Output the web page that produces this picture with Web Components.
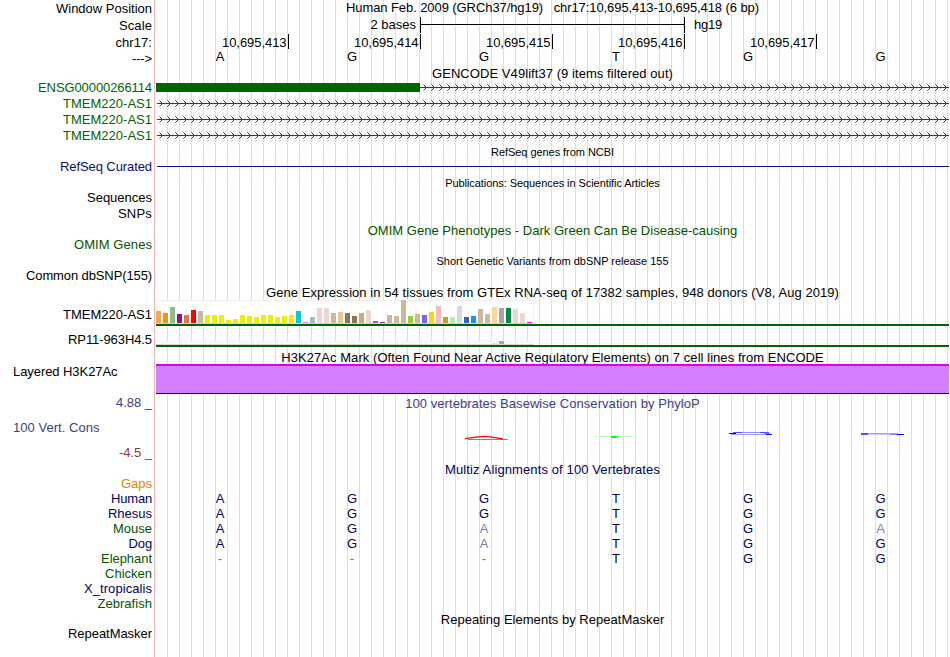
<!DOCTYPE html>
<html lang="en">
<head>
<meta charset="utf-8">
<title>Genome tracks</title>
<style>
html,body{margin:0;background:#fff}
body{width:950px;height:657px;overflow:hidden}
</style>
</head>
<body>
<genome-browser></genome-browser>
<script>
const define = (name, cls) => customElements.define(name, cls);
const BASE_FONT = "13px 'Liberation Sans',Arial,sans-serif";

// A single line of text whose tracking is spread so that it fills the `fit` width.
define('fit-text', class extends HTMLElement {
  connectedCallback() {
    const root = this.attachShadow({mode: 'open'});
    root.innerHTML = `<style>
      :host{display:block;white-space:pre;font:${BASE_FONT};line-height:15px;color:${this.getAttribute('color') || '#000'};
        margin-top:${this.getAttribute('top') || 0}px}
      :host([small]){font-size:11px;line-height:12px}
      span{display:inline-block}
    </style><span></span>`;
    const span = root.querySelector('span');
    span.textContent = this.getAttribute('text');
    const fit = parseFloat(this.getAttribute('fit'));
    if (fit) {
      const n = span.textContent.length;
      const ls = (fit - span.getBoundingClientRect().width) / n;
      span.style.letterSpacing = ls.toFixed(3) + 'px';
    }
  }
});

// One horizontal band: a label column and a drawing area.
define('track-row', class extends HTMLElement {
  connectedCallback() {
    this.attachShadow({mode: 'open'}).innerHTML = `<style>
      :host{display:grid;grid-template-columns:152px 793px;column-gap:4px;height:${this.getAttribute('h')}px}
      .label{display:flex;flex-direction:column;align-items:flex-end;min-width:0}
      :host([left]) .label{align-items:flex-start;padding-left:13px}
      .area{display:flex;flex-direction:column;align-items:center;min-width:0}
    </style><div class="label"><slot name="label"></slot></div><div class="area"><slot></slot></div>`;
  }
});

define('scale-bar', class extends HTMLElement {
  connectedCallback() {
    this.attachShadow({mode: 'open'}).innerHTML = `<style>
      :host{display:grid;grid-template-columns:260px 265px 1fr;column-gap:0;width:793px;height:16px}
      .l{display:flex;justify-content:flex-end}
      .bar{margin-left:4px;width:263px;border:solid #000;border-width:0 1px;height:16px;
        background:linear-gradient(#000,#000) 0 7px/100% 1px no-repeat}
      .r{padding-left:13px}
    </style><div class="l"><fit-text text="2 bases" fit="45.5"></fit-text></div><div class="bar"></div>
    <div class="r"><fit-text text="hg19" fit="28"></fit-text></div>`;
  }
});

define('coord-ruler', class extends HTMLElement {
  connectedCallback() {
    this.attachShadow({mode: 'open'}).innerHTML = `<style>
      :host{display:flex;width:792px;padding-left:1px;box-sizing:border-box}
      div{box-sizing:border-box;width:132px;height:15px;border-right:1px solid #000;padding-right:1.5px;display:flex;justify-content:flex-end}
    </style>` + [413,414,415,416,417].map(n => `<div><fit-text top="1" text="10,695,${n}" fit="64.5"></fit-text></div>`).join('');
  }
});

define('base-row', class extends HTMLElement {
  connectedCallback() {
    const bases = this.getAttribute('bases'), dim = this.getAttribute('dim') || '', color = this.getAttribute('color') || '#000';
    this.attachShadow({mode: 'open'}).innerHTML = `<style>
      :host{display:flex;width:793px;align-self:flex-start;margin-left:-2px}
      div{width:132px;display:flex;justify-content:center}
      div:last-child{width:133px}
    </style>` + [...bases].map((b, i) =>
      `<div><fit-text text="${b}" color="${dim.includes(i) ? '#7f7fb0' : b === '-' ? '#707090' : color}"></fit-text></div>`).join('');
  }
});

// Intron line with strand chevrons, optionally preceded by an exon block.
define('gene-model', class extends HTMLElement {
  connectedCallback() {
    const exon = +this.getAttribute('exon') || 0, start = exon || 1;
    let d = '', tips = '';
    for (let x = 3; x < 793; x += 8) {
      if (x < exon) continue;
      d += `M${x+1} 5h1v1h-1zM${x+2} 6h1v1h-1zM${x+2} 8h1v1h-1zM${x+1} 9h1v1h-1z`;
      tips += `M${x} 4h1v1h-1zM${x} 10h1v1h-1z`;
    }
    this.attachShadow({mode: 'open'}).innerHTML = `<style>:host{display:block}svg{display:block}</style>
      <svg width="793" height="16" shape-rendering="crispEdges" fill="#006400">
      ${exon ? `<rect y="3" width="${exon}" height="9"/>` : ''}<rect x="${start}" y="7" width="${793-start}" height="1"/>
      <path d="${d}"/><path d="${tips}" fill-opacity=".5"/></svg>`;
  }
});

define('plain-line', class extends HTMLElement {
  connectedCallback() {
    this.attachShadow({mode: 'open'}).innerHTML = `<style>:host{display:block;width:792px;height:1px;margin:7px 0 0 1px;background:#0c0c78}</style>`;
  }
});

const TISSUES = ['#ffa54f','#ee9a00','#8fbc8f','#8b1c62','#ee6a50','#ff0000','#cdb79e',...Array(13).fill('#eeee00'),
 '#00cdcd','#ee82ee','#9ac0cd','#eed5d2','#eed5d2','#cdb79e','#eec591','#8b7355','#8b7355','#cdaa7d','#eed5d2','#b452cd','#7a378b',
 '#cdb79e','#cdb79e','#cdb79e','#9acd32','#cdb79e','#7a67ee','#ffd700','#ffb6c1','#cd9b1d','#b4eeb4','#d9d9d9','#3a5fcd','#1e90ff',
 '#cdb79e','#cdb79e','#ffd39b','#a6a6a6','#008b45','#eed5d2','#eed5d2','#ff00ff'];

define('expression-bars', class extends HTMLElement {
  connectedCallback() {
    const v = JSON.parse(this.getAttribute('values')), box = +this.getAttribute('box');
    const bars = TISSUES.map((c, i) => `<i style="height:${v[i] || 0}px;background:${c}"></i>`).join('');
    this.attachShadow({mode: 'open'}).innerHTML = `<style>
      :host{display:block;width:793px;border-bottom:2px solid #006400}
      div{box-sizing:border-box;width:378px;height:${box}px;background:#fff;border:solid #f0f0f0;border-width:1px 1px 0 0;border-bottom:1px solid #d3d3d3;
        display:flex;align-items:flex-end;gap:2px}
      i{flex:0 0 5px}
    </style><div>${bars}</div>`;
  }
});

define('signal-area', class extends HTMLElement {
  connectedCallback() {
    this.attachShadow({mode: 'open'}).innerHTML = `<style>:host{display:block;width:793px;height:30px;box-sizing:border-box;background:#d47fff;border-top:2px solid #d400ff;border-bottom:1px solid #2a0038}</style>`;
  }
});

define('conservation-logo', class extends HTMLElement {
  connectedCallback() {
    this.attachShadow({mode: 'open'}).innerHTML = `<style>:host{display:block}svg{display:block}</style>
    <svg width="793" height="12" viewBox="156 430 793 12" fill="none">
      <path d="M468 439.5h40" stroke="#7a7aff"/>
      <path d="M465 438.6L478 436.9Q484 436 490 436.9L503 438.8" stroke="#f00" stroke-width="1.3"/>
      <path d="M595 436.5h38" stroke="#b8f5b8"/><path d="M611 437h6" stroke="#0f0" stroke-width="2"/>
      <path d="M733 432.5h9M760 432.5h9" stroke="#4a4aff"/><path d="M742 432.5h18" stroke="#8f8fff"/>
      <path d="M729 433.5h7M766 434.5h6" stroke="#00f"/><path d="M764 433.5h6" stroke="#8a8aff"/><path d="M731 434.5h35" stroke="#9a9aff"/>
      <path d="M861 434h8" stroke="#5050ff" stroke-width="2"/><path d="M868 433.5h30" stroke="#9c9cff"/><path d="M868 434.5h22" stroke="#d0d0ff"/><path d="M890 434.5h8" stroke="#8080ff"/><path d="M897 434.5h7" stroke="#00e"/>
    </svg>`;
  }
});

define('genome-browser', class extends HTMLElement {
  connectedCallback() {
    const L = (t, fit, color = '#000', top = 0) => `<fit-text slot="label" text="${t}" fit="${fit}" color="${color}" top="${top}"></fit-text>`;
    const T = (t, fit, color = '#000', top = 0) => `<fit-text text="${t}" fit="${fit}" color="${color}" top="${top}"></fit-text>`;
    const S = (t, fit) => `<fit-text small text="${t}" fit="${fit}" top="2"></fit-text>`;
    const R = (h, inner, attr = '') => `<track-row h="${h}" ${attr}>${inner}</track-row>`;
    const G = '#006400', navy = '#000064', dk = '#005400';
    const gtex = [12,10,16,9,8,13,12,8,8,8,3,4,8,7,6,8,8,6,7,8,12,1,6,15,15,10,11,10,7,10,13,2,1,8,7,23,7,9,8,11,17,6,6,17,6,7,14,9,16,15,15,14,10,1];
    const rp = Array(54).fill(0); rp[48] = 1; rp[49] = 3;
    const species = [['Human',41,navy,'AGGTGG',''],['Rhesus',44,navy,'AGGTGG',''],['Mouse',39,dk,'AGATGA','25'],['Dog',23.5,navy,'AGATGG','2'],
      ['Elephant',51,dk,'---TGG',''],['Chicken',47,dk,'',''],['X_tropicalis',68,navy,'',''],['Zebrafish',54.5,dk,'','']];
    this.attachShadow({mode: 'open'}).innerHTML = `<style>
      :host{display:block;width:949px;height:657px;
        background:linear-gradient(#ffb4b4,#ffb4b4) 154px 0/1px 100% no-repeat,
          repeating-linear-gradient(90deg,#dcdcf8 0 1px,transparent 1px 12px) 167px 0/782px 100% no-repeat,#fff}
      coord-ruler{align-self:flex-start}
    </style>` +
    R(17, L('Window Position',96,'#000',1) + T('Human Feb. 2009 (GRCh37/hg19)   chr17:10,695,413-10,695,418 (6 bp)',413)) +
    R(17, L('Scale',33,'#000',1) + '<scale-bar></scale-bar>') +
    R(15, L('chr17:',36.5,'#000',1) + '<coord-ruler></coord-ruler>') +
    R(17, L('---&gt;',20,'#000',2) + '<base-row bases="AGGTGG"></base-row>') +
    R(14, T('GENCODE V49lift37 (9 items filtered out)',241)) +
    R(16, L('ENSG00000266114',114,G) + '<gene-model exon="264"></gene-model>') +
    R(16, L('TMEM220-AS1',89,G) + '<gene-model></gene-model>').repeat(3) +
    R(15, S('RefSeq genes from NCBI',123)) +
    R(16, L('RefSeq Curated',92,'#0c0c78') + '<plain-line></plain-line>') +
    R(15, S('Publications: Sequences in Scientific Articles',214.5)) +
    R(16, L('Sequences',65)) + R(16, L('SNPs',34)) +
    R(15, T('OMIM Gene Phenotypes - Dark Green Can Be Disease-causing',369.5,dk,1)) +
    R(16, L('OMIM Genes',78,dk)) +
    R(15, S('Short Genetic Variants from dbSNP release 155',232)) +
    R(16, L('Common dbSNP(155)',126)) +
    R(16, T('Gene Expression in 54 tissues from GTEx RNA-seq of 17382 samples, 948 donors (V8, Aug 2019)',573,'#000',1)) +
    R(26, L('TMEM220-AS1',89,'#000',7) + `<expression-bars box="24" values="${JSON.stringify(gtex)}"></expression-bars>`) +
    R(24, L('RP11-963H4.5',84,'#000',6) + `<expression-bars box="4" style="margin-top:15px" values="${JSON.stringify(rp)}"></expression-bars>`) +
    R(14, T('H3K27Ac Mark (Often Found Near Active Regulatory Elements) on 7 cell lines from ENCODE',542.5)) +
    R(31, L('Layered H3K27Ac',104.5) + '<signal-area></signal-area>', 'left') +
    R(25, L('4.88 _',36,'#3c3c8c') + T('100 vertebrates Basewise Conservation by PhyloP',294.5,'#3c3c8c',1)) +
    R(25, L('100 Vert. Cons',86.5,'#3c3c8c') + '<conservation-logo style="margin-top:10px"></conservation-logo>', 'left') +
    R(16, L('-4.5 _',33,'#8c3c3c')) +
    R(15, T('Multiz Alignments of 100 Vertebrates',215,navy,1)) +
    R(15, L('Gaps',31,'#e68200')) +
    species.map(([n, w, c, b, d]) => R(15, L(n,w,c) + (b ? `<base-row bases="${b}" dim="${d}" color="${navy}"></base-row>` : ''))).join('') +
    R(15, T('Repeating Elements by RepeatMasker',223.5,'#000',1)) +
    R(31, L('RepeatMasker',84));
  }
});
</script>
</body>
</html>
